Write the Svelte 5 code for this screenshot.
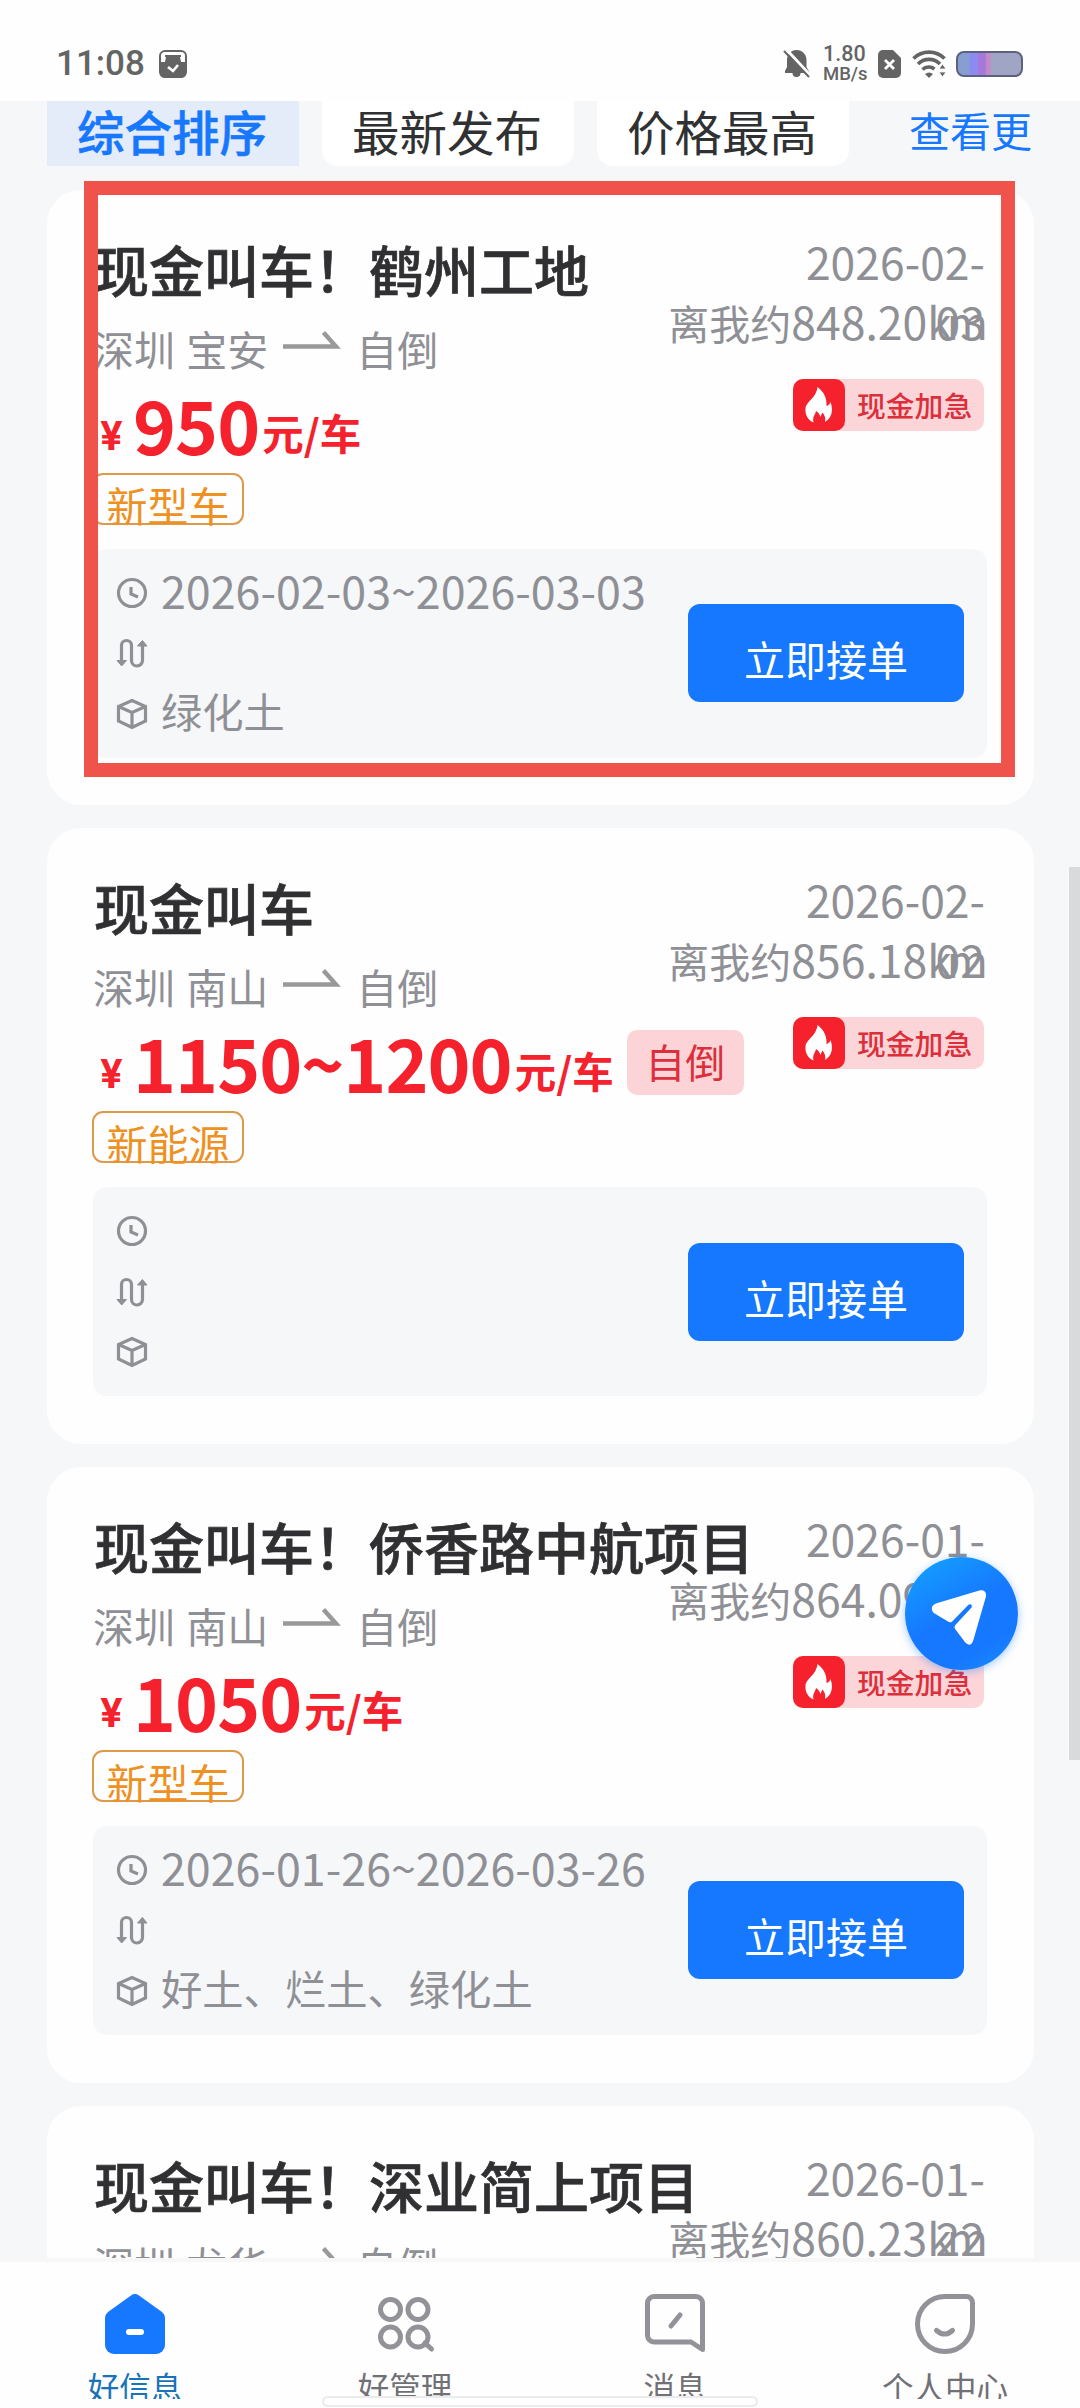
<script lang="ts">
	interface Order {
		title: string;
		from: string;
		date: string;
		distance: string;
		price: string;
		mode?: string;
		truck: string;
		period: string;
		cargo: string;
	}

	const tabs = ['综合排序', '最新发布', '价格最高'];
	let activeTab = $state(0);

	const orders: Order[] = [
		{
			title: '现金叫车！鹤州工地',
			from: '深圳 宝安',
			date: '2026-02-03',
			distance: '848.20',
			price: '950',
			truck: '新型车',
			period: '2026-02-03~2026-03-03',
			cargo: '绿化土'
		},
		{
			title: '现金叫车',
			from: '深圳 南山',
			date: '2026-02-02',
			distance: '856.18',
			price: '1150~1200',
			mode: '自倒',
			truck: '新能源',
			period: '',
			cargo: ''
		},
		{
			title: '现金叫车！侨香路中航项目',
			from: '深圳 南山',
			date: '2026-01-26',
			distance: '864.09',
			price: '1050',
			truck: '新型车',
			period: '2026-01-26~2026-03-26',
			cargo: '好土、烂土、绿化土'
		},
		{
			title: '现金叫车！深业简上项目',
			from: '深圳 龙华',
			date: '2026-01-22',
			distance: '860.23',
			price: '1100',
			truck: '新型车',
			period: '',
			cargo: ''
		}
	];
</script>

<div class="page">
	<header class="status">
		<div class="status-left">
			<span class="time">11:08</span>
			<svg width="28" height="28" viewBox="0 0 28 28">
				<rect x="1" y="1" width="26" height="26" rx="5" fill="none" stroke="#646464" stroke-width="2" />
				<path d="M1 12h5l1-5h14l1 5h5v11a5 5 0 0 1-5 5H6a5 5 0 0 1-5-5z" fill="#646464" />
				<path d="M6 6h16" stroke="#646464" stroke-width="2" />
				<path d="M9 17l5 4 5-6" fill="none" stroke="#fff" stroke-width="2.6" />
			</svg>
		</div>
		<div class="status-right">
			<svg width="26" height="28" viewBox="0 0 26 28">
				<path
					d="M12.500 0c6 0 10 4.500 10 10v7l2.500 4.500v1.500h-8.500a4 4 0 0 1-8 0H1v-2l2-4V10c0-5.500 4-10 9.500-10z"
					fill="#646464"
				/>
				<path d="M2-1l24 26" stroke="#fff" stroke-width="3" />
				<path d="M0 1l25 26" stroke="#646464" stroke-width="2" />
			</svg>
			<div class="speed"><b>1.80</b><span>MB/s</span></div>
			<svg width="23" height="28" viewBox="0 0 23 28">
				<path d="M5 0h10l8 8v15a5 5 0 0 1-5 5H5a5 5 0 0 1-5-5V5a5 5 0 0 1 5-5z" fill="#646464" />
				<path d="M7 10l9 9M16 10l-9 9" stroke="#fff" stroke-width="2.800" />
			</svg>
			<svg class="wifi" width="34" height="28" viewBox="0 0 34 28">
				<g fill="none" stroke="#646464" stroke-width="3.600">
					<path d="M1.500 8.500a22 22 0 0 1 31 0" />
					<path d="M6 14a15.500 15.500 0 0 1 22 0" />
					<path d="M10.500 19.500a9 9 0 0 1 12-.5" />
				</g>
				<path d="M13 24q4-3 8 0l-4 4z" fill="#646464" />
				<path d="M30.500 14l3.500 5h-7zM30.500 27l3.500-5h-7z" fill="#646464" stroke="#fff" stroke-width=".8" />
			</svg>
			<div class="battery"></div>
		</div>
	</header>

	<main class="content">
		<div class="tabs">
			{#each tabs as tab, i}
				<button class="tab" class:active={activeTab === i} type="button" onclick={() => (activeTab = i)}>
					{tab}
				</button>
			{/each}
			<span class="more">查看更多</span>
		</div>

		{#each orders as order}
			<article class="card">
				<div class="head">
					<h3 class="title">{order.title}</h3>
					<span class="date">{order.date}</span>
				</div>
				<div class="route">
					<span class="from">{order.from}</span>
					<svg class="arrow" width="58" height="20" viewBox="0 0 58 20">
						<path d="M0 15.500h53L40.500 1.500" fill="none" stroke="#999" stroke-width="4.400" />
					</svg>
					<span>自倒</span>
					<span class="distance">离我约<b>{order.distance}</b><i>km</i></span>
				</div>
				<div class="price-row">
					<div class="price">
						<span class="yen">¥</span><span class="amount">{order.price}</span><span class="unit">元/车</span>
					</div>
					{#if order.mode}
						<span class="mode">{order.mode}</span>
					{/if}
					<div class="urgent">
						<span class="fire">
							<svg width="28" height="36" viewBox="0 0 28 36">
								<path
									d="M12.500 0C19 5 22 11 21.500 19c2-.5 3.500-2 4-4 3 8 1.500 16-5.500 20 1-4-.5-7-2.500-9.500-1 1.500-1.500 3-2 4.500C14.500 27 13 25 11 24c-.5 3.500-4 6-2.500 11.500C3 33 0 28 .5 22 1 14 11 12 12.500 0z"
									fill="#fff"
								/>
							</svg>
						</span>
						<span class="urgent-text">现金加急</span>
					</div>
				</div>
				<span class="truck">{order.truck}</span>
				<div class="panel">
					<ul class="info">
						<li>
							<svg width="30" height="30" viewBox="0 0 30 30">
								<circle cx="15" cy="15" r="13.500" />
								<path d="M14 9v7l7 3" />
							</svg>
							<span class="period">{order.period}</span>
						</li>
						<li>
							<svg width="30" height="30" viewBox="0 0 30 30">
								<path d="M4.500 26V7.500a5 5 0 0 1 10 0v15a5.500 5.500 0 0 0 11 0V5" />
								<path d="M0 22.500h9.500L4.700 28zM20.500 8h9.500L25.400 2.500z" fill="#8f9095" stroke-width="1" />
							</svg>
						</li>
						<li>
							<svg width="30" height="30" viewBox="0 0 30 30">
								<path d="M15 1.500l13.500 6v14.500L15 28.500 1.500 22V7.500zM1.500 7.500L15 13.500l13.500-6M15 13.500v15" />
							</svg>
							<span>{order.cargo}</span>
						</li>
					</ul>
					<button class="accept" type="button">立即接单</button>
				</div>
			</article>
		{/each}
	</main>

	<nav class="nav">
		<div class="nav-item current">
			<svg width="60" height="60" viewBox="0 0 60 60">
				<path
					d="M26 1.500a7 7 0 0 1 8 0L57 18q3 2.500 3 6v27a9 9 0 0 1-9 9H9a9 9 0 0 1-9-9V24q0-3.500 3-6z"
					fill="#1677ff"
				/>
				<rect x="21" y="35" width="18" height="6" rx="3" fill="#fff" />
			</svg>
			<span>好信息</span>
		</div>
		<div class="nav-item">
			<svg width="60" height="60" viewBox="0 0 60 60">
				<g fill="none" stroke="#929298" stroke-width="5">
					<circle cx="15.500" cy="15.500" r="10" />
					<circle cx="43" cy="15.500" r="10" />
					<circle cx="15.500" cy="43" r="10" />
					<circle cx="43" cy="43" r="10" />
					<path d="M50 49l6.500 6" stroke-linecap="round" />
				</g>
			</svg>
			<span>好管理</span>
		</div>
		<div class="nav-item">
			<svg width="60" height="60" viewBox="0 0 60 60">
				<g fill="none" stroke="#929298" stroke-width="5" stroke-linecap="round" stroke-linejoin="round">
					<path d="M9 2.500h42a6.500 6.500 0 0 1 6.500 6.500v46.500L46 48H9a6.500 6.500 0 0 1-6.500-6.500V9A6.500 6.500 0 0 1 9 2.500z" />
					<path d="M35 21L26 32" />
				</g>
			</svg>
			<span>消息</span>
		</div>
		<div class="nav-item">
			<svg width="60" height="60" viewBox="0 0 60 60">
				<g fill="none" stroke="#929298" stroke-width="5" stroke-linecap="round">
					<path d="M30 2.500h21.500a6 6 0 0 1 6 6V30A27.500 27.500 0 1 1 30 2.500z" />
					<path d="M21.500 36.500q8 7 16 0" />
				</g>
			</svg>
			<span>个人中心</span>
		</div>
	</nav>

	<div class="highlight"></div>
	<div class="scrollbar"></div>
	<button class="locate" type="button" aria-label="定位">
		<svg width="56" height="56" viewBox="0 0 58 58">
			<path
				d="M5 14L50 .5q7.500-1 7 6L43.500 53q-3 6.500-8 1.500L25 40.500q-1.500-2 0-4L42 18q1-2-.5-3-1.500-.8-3.500 1L22 32.500q-2 1.500-4 .5L2.500 23.500Q-2 17 5 14z"
				fill="#fff"
			/>
		</svg>
	</button>
	<div class="home-bar"></div>
</div>

<style>
	:global(body) {
		margin: 0;
	}

	.page {
		position: relative;
		display: flex;
		flex-direction: column;
		width: 1080px;
		height: 2408px;
		overflow: hidden;
		background: #f6f7f9;
		font-family: 'Noto Sans CJK SC', sans-serif;
		color: #8f9095;
	}

	button {
		border: 0;
		padding: 0;
		font-family: inherit;
	}

	svg {
		display: block;
		flex: none;
		overflow: visible;
	}

	.status {
		display: flex;
		align-items: center;
		justify-content: space-between;
		box-sizing: border-box;
		height: 101px;
		padding: 27px 57px 0 56px;
		background: #fefefe;
		color: #646464;
	}

	.status-left,
	.status-right {
		display: flex;
		align-items: center;
	}

	.status-left {
		gap: 14px;
	}

	.time {
		font: 500 35px/40px Roboto, sans-serif;
	}

	.speed {
		display: flex;
		flex-direction: column;
		width: 43px;
		margin: 0 12px 0 13px;
		font: 500 20px/21px Roboto, sans-serif;
	}

	.speed b {
		font-weight: 500;
		font-size: 21.5px;
	}

	.speed span {
		font-size: 18.5px;
	}

	.wifi {
		margin: 0 10px 0 11px;
	}

	.battery {
		box-sizing: border-box;
		width: 67px;
		height: 26px;
		border: 2.5px solid #5d6180;
		border-radius: 8px;
		background: linear-gradient(90deg, #879fd0 0 16%, #8a8cf0 20% 30%, #a678d8 33% 43%, #c08cc8 46% 51%, #a0a5c4 54%);
	}

	.content {
		flex: 1;
		min-height: 0;
		overflow: hidden;
		padding: 0 46px 0 47px;
	}

	.tabs {
		display: flex;
		gap: 23px;
		height: 65px;
		margin-bottom: 23.5px;
		overflow: hidden;
	}

	.tab {
		flex: none;
		width: 252px;
		padding: 0 2px 6px 0;
		border-radius: 0 0 16px 16px;
		background: #fff;
		color: #303133;
		font-size: 47.5px;
		line-height: 56px;
	}

	.tab.active {
		border-radius: 0;
		background: #e4ecf9;
		color: #1677ff;
		font-weight: 500;
		-webkit-text-stroke: 0.5px;
	}

	.more {
		width: 123px;
		margin-left: 37px;
		overflow: hidden;
		color: #1677ff;
		font-size: 41px;
		line-height: 56px;
		white-space: nowrap;
	}

	.card {
		box-sizing: border-box;
		height: 615.7px;
		margin-bottom: 23px;
		padding: 48px 47px 0;
		border-radius: 34px;
		background: #fefefe;
	}

	.head {
		display: flex;
		justify-content: space-between;
		height: 62px;
	}

	.title {
		margin: 0;
		color: #303033;
		font-size: 55px;
		font-weight: 500;
		line-height: 61px;
		white-space: nowrap;
		-webkit-text-stroke: 0.7px;
	}

	.date {
		width: 190px;
		margin: -7px 2px 0 0;
		font-size: 44.5px;
		line-height: 60px;
		text-align: right;
	}

	.route {
		display: flex;
		height: 60px;
		margin-top: 18px;
		font-size: 41px;
		line-height: 60px;
	}

	.from {
		word-spacing: 2px;
		margin-left: -1px;
	}

	.arrow {
		margin: 13px 15px 0 15px;
	}

	.distance {
		margin: -27px 2px 0 auto;
	}

	.distance b {
		font-size: 44.5px;
		font-weight: 400;
	}

	.distance i {
		font-size: 44.5px;
		font-style: normal;
		letter-spacing: -5px;
		margin-right: 2px;
	}

	.price-row {
		display: flex;
		height: 70px;
		margin-top: 14px;
	}

	.price {
		display: flex;
		align-items: baseline;
		height: 70px;
		padding-left: 6px;
		color: #f5222d;
		line-height: 62px;
		font-weight: 700;
		white-space: nowrap;
	}

	.yen,
	.unit {
		position: relative;
		top: -5px;
	}

	.yen {
		width: 33px;
		font-family: Inter, sans-serif;
		font-size: 40px;
	}

	.amount {
		font-size: 73px;
		letter-spacing: -1px;
	}

	.unit {
		margin-left: 3px;
		font-size: 41.5px;
	}

	.mode {
		width: 117px;
		height: 65px;
		margin-left: 13px;
		border-radius: 10px;
		background: #fcd4d7;
		color: #dc2f3c;
		font-size: 40px;
		line-height: 62px;
		text-align: center;
	}

	.urgent {
		display: flex;
		align-items: center;
		width: 191px;
		height: 52px;
		margin: -13px 3px 0 auto;
		border-radius: 10px;
		background: #fcd5d8;
	}

	.fire {
		display: flex;
		align-items: center;
		justify-content: center;
		width: 52px;
		height: 52px;
		border-radius: 10px;
		background: #f5222d;
	}

	.urgent-text {
		margin-left: 12px;
		color: #dc2f3c;
		font-size: 28.8px;
		font-weight: 500;
		line-height: 50px;
		white-space: nowrap;
	}

	.truck {
		display: block;
		box-sizing: border-box;
		width: 152px;
		height: 52px;
		margin: 11px 0 0 -2px;
		border: 2px solid #dd9a4a;
		border-radius: 11px;
		color: #ee9022;
		font-size: 41px;
		line-height: 58px;
		text-align: center;
		white-space: nowrap;
	}

	.panel {
		display: flex;
		align-items: center;
		justify-content: space-between;
		box-sizing: border-box;
		height: 209px;
		margin: 24px 0 0 -1px;
		padding: 0 23px 0 24px;
		border-radius: 14px;
		background: #f6f7f9;
	}

	.info {
		display: flex;
		flex-direction: column;
		margin: 0;
		padding: 0;
		list-style: none;
	}

	.info li {
		display: flex;
		align-items: center;
		gap: 14px;
		height: 60.5px;
		font-size: 41.3px;
		line-height: 58px;
		white-space: nowrap;
	}

	.info span {
		margin-top: -8px;
	}

	.info svg {
		fill: none;
		stroke: #8f9095;
		stroke-width: 3.2;
	}

	.info .period {
		margin-top: -6px;
		font-size: 44.8px;
	}

	.accept {
		width: 276px;
		height: 98px;
		padding-top: 10px;
		border-radius: 12px;
		background: #1677ff;
		color: #fff;
		font-size: 41px;
	}

	.nav {
		display: flex;
		box-sizing: border-box;
		height: 150px;
		padding-top: 32px;
		border-top: 4px solid #f7f7f8;
		background: #fefefe;
	}

	.nav-item {
		display: flex;
		flex: 1;
		flex-direction: column;
		align-items: center;
		height: 105px;
		overflow: hidden;
		color: #707076;
		font-size: 31.5px;
		line-height: 40px;
	}

	.nav-item span {
		margin-top: 12px;
	}

	.nav-item.current {
		color: #1a72b8;
	}

	.highlight {
		position: absolute;
		top: 181px;
		left: 84px;
		box-sizing: border-box;
		width: 931px;
		height: 596px;
		border: 14px solid #ef534c;
	}

	.scrollbar {
		position: absolute;
		top: 867px;
		right: 0;
		width: 11px;
		height: 893px;
		background: #d8dadc;
	}

	.locate {
		position: absolute;
		top: 1557px;
		left: 905px;
		display: flex;
		align-items: center;
		justify-content: center;
		box-sizing: border-box;
		width: 113px;
		height: 113px;
		padding: 8px 6px 0 0;
		border-radius: 50%;
		background: linear-gradient(150deg, #14a0ff 5%, #1677ff 50%, #1677ff 75%, #1890ff 100%);
		box-shadow: 0 2px 8px rgba(22, 119, 255, 0.4);
	}

	.home-bar {
		position: absolute;
		bottom: 1px;
		left: 322px;
		box-sizing: border-box;
		width: 436px;
		height: 11px;
		border: 2px solid #ebebed;
		border-radius: 6px;
		background: #fefefe;
	}
</style>
